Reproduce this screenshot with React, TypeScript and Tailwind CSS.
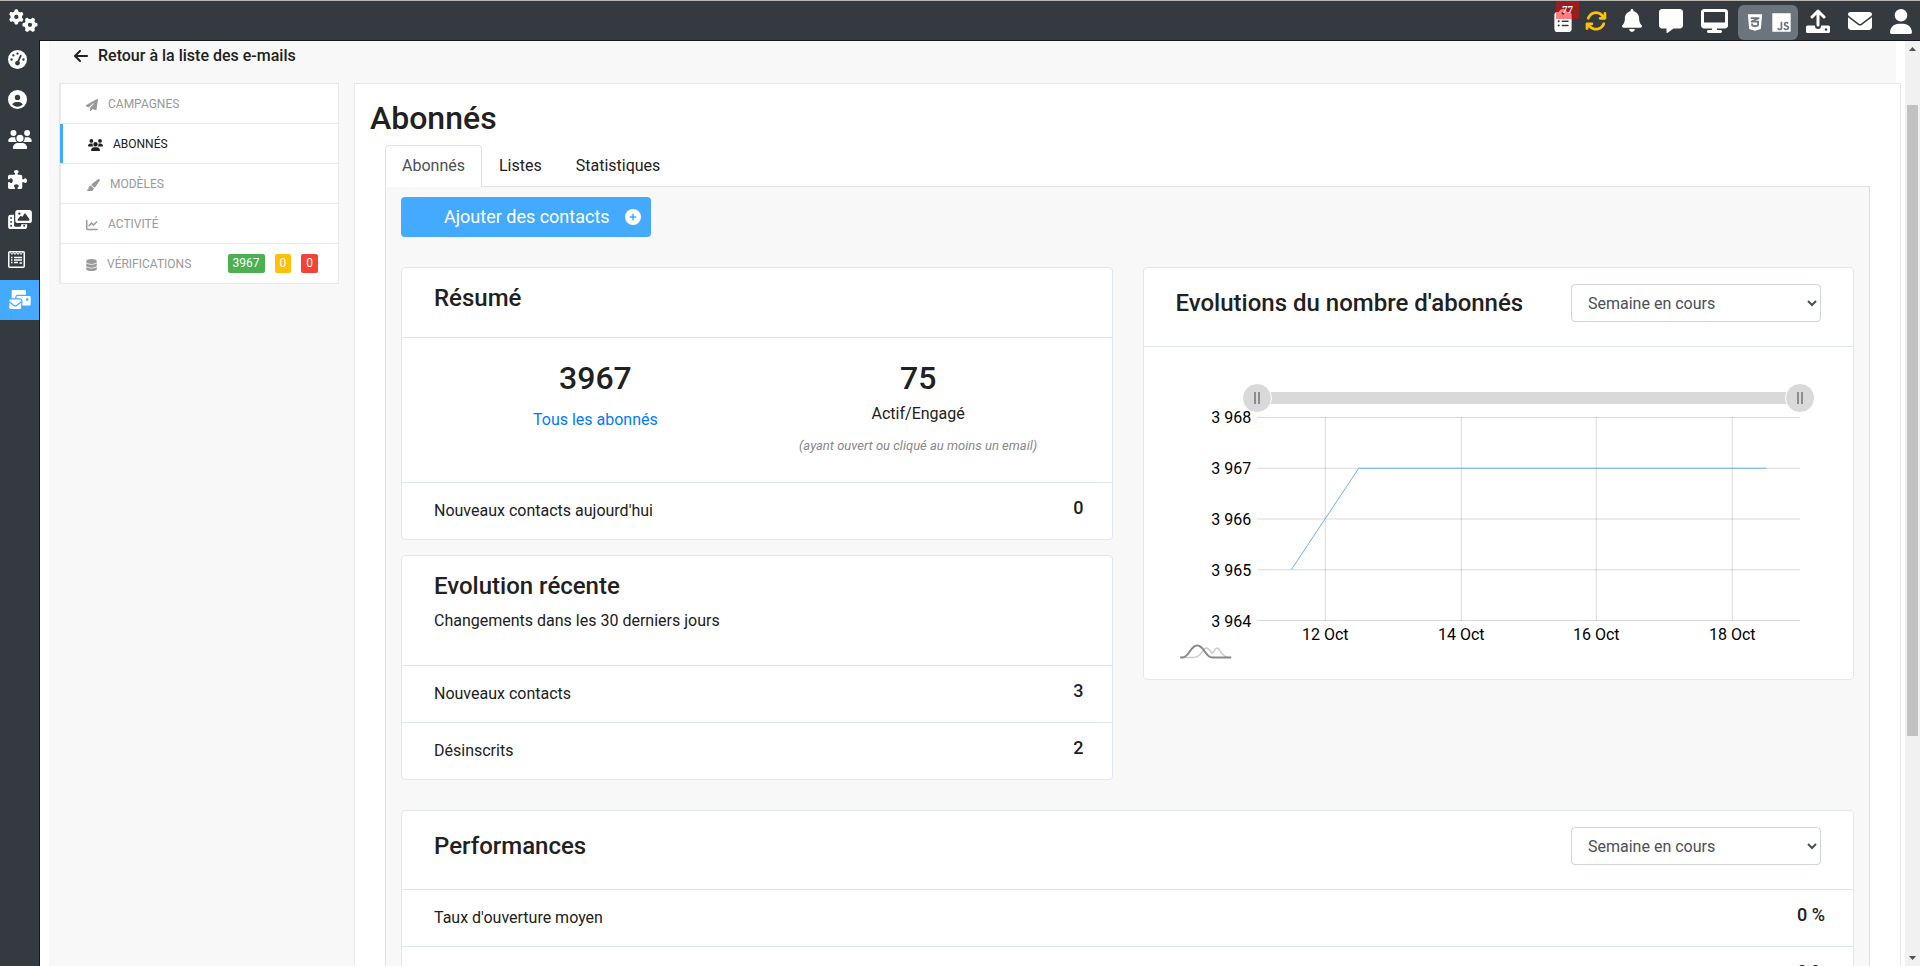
import { useState } from 'react';
import type { ReactNode } from 'react';
import type { IconType } from 'react-icons';
import {
  FaArrowLeft,
  FaArrowsRotate,
  FaBell,
  FaChartLine,
  FaCirclePlus,
  FaCircleUser,
  FaClipboardList,
  FaCss3Alt,
  FaDatabase,
  FaDesktop,
  FaEnvelope,
  FaEnvelopesBulk,
  FaGaugeHigh,
  FaGears,
  FaJs,
  FaMessage,
  FaPaintbrush,
  FaPaperPlane,
  FaPhotoFilm,
  FaPuzzlePiece,
  FaUser,
  FaUsers,
} from 'react-icons/fa6';

const TABS = ['Abonnés', 'Listes', 'Statistiques'];

const Y_LABELS = ['3 968', '3 967', '3 966', '3 965', '3 964'];
const X_LABELS = [
  { x: 149, label: '12 Oct' },
  { x: 285, label: '14 Oct' },
  { x: 420, label: '16 Oct' },
  { x: 556, label: '18 Oct' },
];

function FormIcon() {
  return (
    <svg width="17" height="17" viewBox="0 0 17 17" fill="none" stroke="#fff">
      <rect x="0.75" y="0.75" width="15.5" height="15.5" rx="1" strokeWidth="1.5" />
      <path d="M2.5 1.500l1.500 2 1.500-2 1.500 2 1.500-2 1.500 2 1.500-2 1.500 2 1.500-2" strokeWidth="1" />
      <path d="M3 6.500h1.500M6 6.500h8M3 9h1.500M6 9h8M3 11.500h1.500M6 11.500h4M11.500 12h2.500" strokeWidth="1.300" />
    </svg>
  );
}

function UploadIcon() {
  return (
    <svg width="24" height="24" viewBox="0 0 24 24">
      <path d="M12 16V2.5M6 8l6-6 6 6" fill="none" stroke="#fff" strokeWidth="3" strokeLinecap="round" strokeLinejoin="round" />
      <path
        d="M1.5 16.5H9V17a3 3 0 0 0 6 0v-.5h7.5A1.5 1.5 0 0 1 24 18v4.500a1.500 1.500 0 0 1-1.500 1.500h-21A1.500 1.500 0 0 1 0 22.500V18a1.500 1.500 0 0 1 1.500-1.500z"
        fill="#fff"
      />
      <circle cx="20" cy="20.500" r="1.200" fill="#343a40" />
    </svg>
  );
}

function IconButton({ label, className = '', children }: { label: string; className?: string; children: ReactNode }) {
  return (
    <button type="button" aria-label={label} className={`flex shrink-0 items-center text-white ${className}`}>
      {children}
    </button>
  );
}

function TopBar() {
  return (
    <header className="flex h-[41px] shrink-0 items-center border-y border-t-[#b9b5b1] border-b-[#16191c] bg-[#343a40] pr-2 pl-[9px]">
      <IconButton label="Réglages" className="mr-auto">
        <FaGears className="h-[23px] w-[29px]" />
      </IconButton>
      <IconButton label="Tâches" className="relative">
        <FaClipboardList className="h-[23px] w-[18px]" />
        <span className="absolute -top-2 left-0.5 flex h-[18px] w-[23px] justify-center bg-[#ff0000]/50 font-['Liberation_Serif',serif] text-[11px] leading-[17px] font-bold">
          77
        </span>
      </IconButton>
      <IconButton label="Synchroniser" className="ml-[13px]">
        <FaArrowsRotate className="size-[22px] text-[#ffc107]" />
      </IconButton>
      <IconButton label="Notifications" className="ml-[15px]">
        <FaBell className="h-[23px] w-5" />
      </IconButton>
      <IconButton label="Messages" className="ml-[17px]">
        <FaMessage className="size-6" />
      </IconButton>
      <IconButton label="Écran" className="ml-[18px]">
        <FaDesktop className="h-6 w-[27px]" />
      </IconButton>
      <div className="ml-[10px] flex h-[35px] w-[60px] items-center justify-center gap-2 self-end rounded-md bg-[#6c757d]">
        <IconButton label="CSS">
          <FaCss3Alt className="h-[19px] w-[18px]" />
        </IconButton>
        <IconButton label="JavaScript">
          <FaJs className="h-[21px] w-[19px]" />
        </IconButton>
      </div>
      <IconButton label="Envoyer un fichier" className="ml-2">
        <UploadIcon />
      </IconButton>
      <IconButton label="E-mails" className="ml-[18px]">
        <FaEnvelope className="size-6" />
      </IconButton>
      <IconButton label="Compte" className="mt-0.5 ml-[18px]">
        <FaUser className="h-[25px] w-[22px]" />
      </IconButton>
    </header>
  );
}

function SideLink({ href, label, active, children }: { href: string; label: string; active?: boolean; children: ReactNode }) {
  return (
    <a href={href} aria-label={label} className={`flex h-10 items-center pb-0.5 pl-2 ${active ? 'bg-[#44aaff]' : ''}`}>
      {children}
    </a>
  );
}

function SideNav() {
  return (
    <nav className="-mt-px flex w-10 shrink-0 flex-col border-r border-[#16191c] bg-[#343a40] text-white">
      <SideLink href="#dashboard" label="Tableau de bord">
        <FaGaugeHigh className="size-[19px]" />
      </SideLink>
      <SideLink href="#profil" label="Profil">
        <FaCircleUser className="size-[19px]" />
      </SideLink>
      <SideLink href="#groupes" label="Groupes">
        <FaUsers className="h-[19px] w-6" />
      </SideLink>
      <SideLink href="#modules" label="Modules">
        <FaPuzzlePiece className="size-[19px]" />
      </SideLink>
      <SideLink href="#medias" label="Médias">
        <FaPhotoFilm className="h-[19px] w-6" />
      </SideLink>
      <SideLink href="#formulaires" label="Formulaires">
        <FormIcon />
      </SideLink>
      <SideLink href="#emails" label="E-mails" active>
        <FaEnvelopesBulk className="h-[19px] w-6" />
      </SideLink>
    </nav>
  );
}

interface MenuItemProps {
  icon: IconType;
  iconClass: string;
  label: string;
  active?: boolean;
  children?: ReactNode;
}

function MenuItem({ icon: Icon, iconClass, label, active, children }: MenuItemProps) {
  return (
    <li className="border-b border-[#e8e8e8]">
      <a
        href="#menu"
        className={`flex h-[39px] items-center pr-5 text-xs ${
          active ? 'border-l-3 border-[#44aaff] pl-[25px] text-[#212121]' : 'border-l border-[#e8e8e8] pl-[25px] text-[#999]'
        }`}
      >
        <Icon className={`mt-0.5 mr-[10px] h-3 shrink-0 ${iconClass}`} />
        <span className="mr-auto">{label}</span>
        {children}
      </a>
    </li>
  );
}

function Menu() {
  return (
    <ul className="ml-[10px] w-[280px] shrink-0 self-start border border-b-0 border-[#e8e8e8] bg-white">
      <MenuItem icon={FaPaperPlane} iconClass="w-3" label="CAMPAGNES" />
      <MenuItem icon={FaUsers} iconClass="w-[15px]" label="ABONNÉS" active />
      <MenuItem icon={FaPaintbrush} iconClass="w-[14px]" label="MODÈLES" />
      <MenuItem icon={FaChartLine} iconClass="w-3" label="ACTIVITÉ" />
      <MenuItem icon={FaDatabase} iconClass="w-[11px]" label="VÉRIFICATIONS">
        <span className="flex gap-[10px] text-xs leading-[19px] text-white">
          <span className="rounded-xs bg-[#4caf50] px-[5px]">3967</span>
          <span className="rounded-xs bg-[#ffc107] px-[5px]">0</span>
          <span className="rounded-xs bg-[#f44336] px-[5px]">0</span>
        </span>
      </MenuItem>
    </ul>
  );
}

function Card({ children }: { children: ReactNode }) {
  return <section className="divide-y divide-[#e1e7f0] rounded border border-[#e1e7f0] bg-white">{children}</section>;
}

function Row({ label, value }: { label: string; value: string }) {
  return (
    <div className="flex items-start justify-between py-4 pr-7 pl-8">
      <span>{label}</span>
      <span className="text-lg leading-[18px] font-medium">{value}</span>
    </div>
  );
}

function PeriodHeader({ id, title }: { id: string; title: string }) {
  return (
    <div className="flex items-center justify-between px-8 pt-4 pb-6">
      <h2 className="text-2xl leading-[29px] font-medium">
        <label htmlFor={id}>{title}</label>
      </h2>
      <select id={id} className="h-[38px] w-[250px] rounded border border-[#ced4da] bg-white px-3 text-[#495057]">
        <option>Semaine en cours</option>
        <option>Mois en cours</option>
      </select>
    </div>
  );
}

const handleClass =
  "pointer-events-none absolute inset-0 h-[30px] w-full appearance-none bg-transparent [&::-webkit-slider-thumb]:pointer-events-auto [&::-webkit-slider-thumb]:size-[30px] [&::-webkit-slider-thumb]:appearance-none [&::-webkit-slider-thumb]:rounded-full [&::-webkit-slider-thumb]:border [&::-webkit-slider-thumb]:border-white [&::-webkit-slider-thumb]:bg-[#d9d9d9] [&::-webkit-slider-thumb]:bg-[linear-gradient(90deg,#8c8c8c_2px,transparent_2px,transparent_4px,#8c8c8c_4px)] [&::-webkit-slider-thumb]:bg-[length:6px_12px] [&::-webkit-slider-thumb]:bg-center [&::-webkit-slider-thumb]:bg-no-repeat";

function RangeScroller() {
  const [start, setStart] = useState(0);
  const [end, setEnd] = useState(100);

  return (
    <div className="relative mr-[6px] ml-[66px] flex h-[30px] items-center px-[15px]">
      <div className="h-3 w-full bg-[#d9d9d9]" />
      <input
        type="range"
        aria-label="Début de la période"
        className={handleClass}
        value={start}
        onChange={(e) => setStart(Math.min(Number(e.target.value), end))}
      />
      <input
        type="range"
        aria-label="Fin de la période"
        className={handleClass}
        value={end}
        onChange={(e) => setEnd(Math.max(Number(e.target.value), start))}
      />
    </div>
  );
}

function SubscriberChart() {
  return (
    <div className="px-8 pt-9 pb-4">
      <RangeScroller />
      <svg viewBox="0 0 645 250" className="h-[250px] w-full overflow-visible">
        <g stroke="#000" strokeOpacity="0.15">
          {Y_LABELS.map((label, i) => (
            <line key={label} x1="81" x2="624" y1={4.5 + i * 50.75} y2={4.5 + i * 50.75} />
          ))}
          {X_LABELS.map(({ x, label }) => (
            <line key={label} x1={x} x2={x} y1="4" y2="208" />
          ))}
        </g>
        <path d="M115 156.750L182.500 55.250H590" fill="none" stroke="#67b7dc" />
        <g fontSize="16" fill="#000">
          {Y_LABELS.map((label, i) => (
            <text key={label} x="75" y={10 + i * 51} textAnchor="end">
              {label}
            </text>
          ))}
          {X_LABELS.map(({ x, label }) => (
            <text key={label} x={x} y="227" textAnchor="middle">
              {label}
            </text>
          ))}
        </g>
        <g fill="none" strokeWidth="1.600">
          <path d="M4 244.500h13c9 0 9-9.500 13-9.500s4 5 6 5 2-5 5-5 4 9.500 12 9.500" stroke="#ccc" />
          <path d="M4 244.500h2c7 0 8-12 15-12s8 12 15 12h19" stroke="#888" strokeWidth="2" />
        </g>
      </svg>
    </div>
  );
}

function Subscribers() {
  return (
    <div className="border-x border-[#dee2e6] bg-[#f8f8f8] px-[15px] pt-[10px] pb-[30px]">
      <button type="button" className="flex h-10 w-[250px] items-center rounded bg-[#44aaff] pr-[10px] pl-[43px] text-lg text-white">
        Ajouter des contacts
        <FaCirclePlus className="ml-auto size-4" />
      </button>

      <div className="mt-[30px] grid grid-cols-2 items-start gap-[30px]">
        <div className="flex flex-col gap-[15px]">
          <Card>
            <div className="px-8 pt-4 pb-6">
              <h2 className="text-2xl leading-[29px] font-medium">Résumé</h2>
            </div>
            <div className="grid grid-cols-2 px-8 pt-5 pb-6 text-center">
              <div>
                <div className="text-[32px] leading-10 font-medium">3967</div>
                <a href="#tous" className="mt-[10px] block text-[#007bff]">
                  Tous les abonnés
                </a>
              </div>
              <div>
                <div className="text-[32px] leading-10 font-medium">75</div>
                <div className="mt-1">Actif/Engagé</div>
                <div className="mt-2 text-[13px] leading-6 text-[#888] italic">(ayant ouvert ou cliqué au moins un email)</div>
              </div>
            </div>
            <Row label="Nouveaux contacts aujourd'hui" value="0" />
          </Card>

          <Card>
            <div className="px-8 pt-4 pb-8">
              <h2 className="mb-2 text-2xl leading-[29px] font-medium">Evolution récente</h2>
              <p>Changements dans les 30 derniers jours</p>
            </div>
            <Row label="Nouveaux contacts" value="3" />
            <Row label="Désinscrits" value="2" />
          </Card>
        </div>

        <Card>
          <PeriodHeader id="evolution-period" title="Evolutions du nombre d'abonnés" />
          <SubscriberChart />
        </Card>
      </div>

      <div className="mt-[30px]">
        <Card>
          <PeriodHeader id="performance-period" title="Performances" />
          <Row label="Taux d'ouverture moyen" value="0 %" />
          <Row label="Taux de clic moyen" value="0 %" />
        </Card>
      </div>
    </div>
  );
}

function ScrollRail() {
  return (
    <div className="flex w-[15px] shrink-0 flex-col items-center bg-[#f1f1f1] text-[#505050]" aria-hidden="true">
      <svg width="15" height="15" viewBox="0 0 15 15">
        <path d="M4 10l3.500-4 3.500 4z" fill="currentColor" />
      </svg>
      <div className="flex-[49]" />
      <div className="w-[11px] flex-[631] bg-[#c1c1c1]" />
      <div className="flex-[215]" />
      <svg width="15" height="15" viewBox="0 0 15 15">
        <path d="M4 5l3.500 4 3.500-4z" fill="currentColor" />
      </svg>
    </div>
  );
}

export default function App() {
  const [tab, setTab] = useState('Abonnés');

  return (
    <div className="flex h-screen flex-col overflow-hidden bg-white font-[Roboto,sans-serif] text-base text-[#212121]">
      <TopBar />
      <div className="flex min-h-0 flex-1">
        <SideNav />
        <main className="min-w-0 flex-1 overflow-hidden px-[9px]">
          <div className="bg-[#f8f8f8]">
            <div className="flex h-[42px] items-start pt-[3px] pl-[25px]">
              <a href="#liste" className="flex items-center gap-[10px] font-medium">
                <FaArrowLeft className="h-4 w-[14px]" />
                Retour à la liste des e-mails
              </a>
            </div>
            <div className="flex gap-[15px]">
              <Menu />
              <div className="-mr-[5px] min-w-0 flex-1 border border-[#e8e8e8] bg-white px-[15px] pt-4">
                <h1 className="mb-2 text-[32px] leading-[37px] font-medium">Abonnés</h1>
                <div className="px-[15px]">
                  <div role="tablist" className="flex border-b border-[#dee2e6]">
                    {TABS.map((name) => (
                      <button
                        key={name}
                        type="button"
                        role="tab"
                        aria-selected={name === tab}
                        onClick={() => setTab(name)}
                        className={`-mb-px rounded-t border px-4 pt-2 pb-2 ${
                          name === tab ? 'border-[#dee2e6] border-b-white bg-white text-[#495057]' : 'border-transparent'
                        }`}
                      >
                        {name}
                      </button>
                    ))}
                  </div>
                  <Subscribers />
                </div>
              </div>
            </div>
          </div>
        </main>
        <ScrollRail />
      </div>
    </div>
  );
}
